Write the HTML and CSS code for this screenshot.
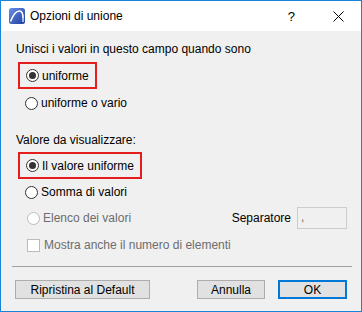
FILE: index.html
```html
<!DOCTYPE html>
<html>
<head>
<meta charset="utf-8">
<link rel="stylesheet" href="styles.css">
</head>
<body>
<div class="window">
  <div class="titlebar">
    <svg class="appicon" width="16" height="16" viewBox="0 0 16 16">
      <defs>
        <linearGradient id="g" x1="0" y1="0" x2="1" y2="1">
          <stop offset="0" stop-color="#6a8ee8"/>
          <stop offset="1" stop-color="#1c3f9e"/>
        </linearGradient>
      </defs>
      <rect x="0" y="0" width="16" height="16" rx="2.5" fill="url(#g)"/>
      <path d="M1.5 13.5 C4 7 7.5 3 10.5 3 C13 3 14 6 14 10" fill="none" stroke="#fff" stroke-width="1.6"/>
      <path d="M14 10 L14 14" stroke="#fff" stroke-width="1.2"/>
    </svg>
    <span class="title">Opzioni di unione</span>
    <span class="help">?</span>
    <svg class="close" width="11" height="11" viewBox="0 0 11 11">
      <path d="M0.5 0.5 L10.5 10.5 M10.5 0.5 L0.5 10.5" stroke="#000" stroke-width="1"/>
    </svg>
  </div>
  <div class="content">
    <div class="label first">Unisci i valori in questo campo quando sono</div>
    <div class="box box1">
      <span class="radio checked"></span><span>uniforme</span>
    </div>
    <div class="row r2"><span class="radio"></span><span>uniforme o vario</span></div>
    <div class="label second">Valore da visualizzare:</div>
    <div class="box box2">
      <span class="radio checked"></span><span>Il valore uniforme</span>
    </div>
    <div class="row r4"><span class="radio"></span><span>Somma di valori</span></div>
    <div class="row r5 disabled">
      <span class="radio"></span><span class="grow">Elenco dei valori</span>
      <span class="seplabel">Separatore</span>
      <span class="sepinput">,</span>
    </div>
    <div class="row r6 disabled"><span class="check"></span><span>Mostra anche il numero di elementi</span></div>
  </div>
  <div class="sep"></div>
  <div class="buttons">
    <button class="btn reset">Ripristina al Default</button>
    <span class="spacer"></span>
    <button class="btn cancel">Annulla</button>
    <button class="btn ok">OK</button>
  </div>
</div>
</body>
</html>
```

FILE: styles.css
```css
* { box-sizing: border-box; }
html, body { margin: 0; padding: 0; }
body {
  font-family: "Liberation Sans", Arial, sans-serif;
  font-size: 12px;
  color: #000;
  background: #fff;
}
.window {
  width: 362px;
  height: 312px;
  border: 1px solid #1883d7;
  background: #f0f0f0;
  display: flex;
  flex-direction: column;
}
.titlebar {
  height: 30px;
  background: #fff;
  display: flex;
  align-items: center;
  flex-shrink: 0;
}
.appicon { margin-left: 8px; }
.title { margin-left: 5px; flex: 1; font-size: 12px; }
.help { font-size: 13px; margin-right: 38px; }
.close { margin-right: 17px; }
.content {
  padding: 10px 14px 0 15px;
  display: flex;
  flex-direction: column;
}
.label { line-height: 16px; height: 16px; white-space: nowrap; }
.row, .box {
  display: flex;
  align-items: center;
  line-height: 16px;
  white-space: nowrap;
}
.box {
  align-self: flex-start;
  border: 2px solid #e51d1d;
  margin-left: 2px;
  padding-left: 6px;
  padding-right: 6px;
  height: 27px;
}
.box1 { margin-top: 5px; }
.box2 { margin-top: 4px; }
.row { height: 16px; padding-left: 9px; }
.r2 { margin-top: 6px; }
.second { margin-top: 21px; }
.r4 { margin-top: 5px; }
.r5 { margin-top: 7px; height: 22px; padding-left: 11px; }
.r6 { margin-top: 8px; padding-left: 11px; }
.radio {
  width: 13px;
  height: 13px;
  border-radius: 50%;
  border: 1px solid #333;
  background: #fff;
  margin-right: 3px;
  position: relative;
  flex-shrink: 0;
}
.radio.checked::after {
  content: "";
  position: absolute;
  left: 2px; top: 2px;
  width: 7px; height: 7px;
  border-radius: 50%;
  background: #333;
}
.check {
  width: 13px;
  height: 13px;
  border: 1px solid #bcbcbc;
  background: #fff;
  margin-right: 4px;
  flex-shrink: 0;
}
.disabled { color: #6d6d6d; }
.disabled .radio { border-color: #bcbcbc; }
.grow { flex: 1; }
.seplabel { color: #000; margin-right: 6px; }
.sepinput {
  width: 50px;
  height: 22px;
  border: 1px solid #cccccc;
  background: #f0f0f0;
  padding-left: 3px;
  line-height: 18px;
  color: #6d6d6d;
}
.sep {
  height: 1px;
  background: #a0a0a0;
  margin: 13px 9px 0 11px;
}
.buttons {
  display: flex;
  padding: 13px 14px 0 14px;
}
.spacer { flex: 1; }
.btn {
  font-family: inherit;
  font-size: 12px;
  height: 19px;
  border: 1px solid #adadad;
  background: #e1e1e1;
  padding: 0;
  color: #000;
  line-height: 16px;
}
.reset { width: 135px; }
.cancel { width: 68px; margin-right: 13px; }
.ok { width: 69px; border: 2px solid #0078d7; }
```
